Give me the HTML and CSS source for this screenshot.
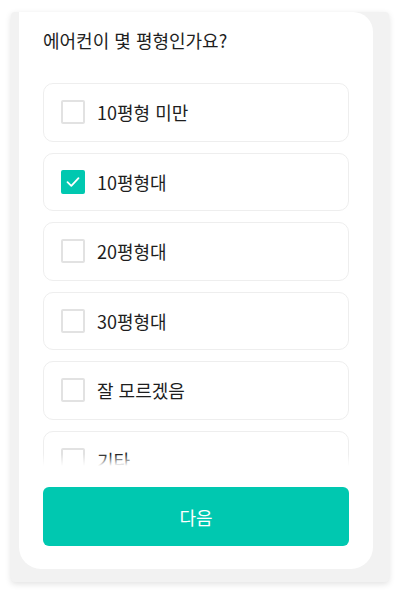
FILE: index.html
```html
<!DOCTYPE html>
<html lang="ko">
<head>
  <meta charset="UTF-8">
  <meta name="viewport" content="width=device-width, initial-scale=1.0">
  <title>에어컨 평형 선택</title>
  <link rel="stylesheet" href="styles.css">
</head>
<body>
<div class="shell">
  <div class="card">
    <h2 class="question">에어컨이 몇 평형인가요?</h2>

    <div class="list-wrap">
      <div class="list">
        <label class="option">
          <span class="box"></span>
          <span class="label">10평형 미만</span>
        </label>
        <label class="option">
          <span class="box checked">
            <svg width="16" height="16" viewBox="0 0 16 16"><polyline points="2.5,8.2 6.3,11.8 13.5,4.2" fill="none" stroke="#fff" stroke-width="1.8" stroke-linecap="round" stroke-linejoin="round"/></svg>
          </span>
          <span class="label">10평형대</span>
        </label>
        <label class="option">
          <span class="box"></span>
          <span class="label">20평형대</span>
        </label>
        <label class="option">
          <span class="box"></span>
          <span class="label">30평형대</span>
        </label>
        <label class="option">
          <span class="box"></span>
          <span class="label">잘 모르겠음</span>
        </label>
        <label class="option">
          <span class="box"></span>
          <span class="label">기타</span>
        </label>
      </div>
    </div>

    <button class="next">다음</button>
  </div>
</div>
</body>
</html>
```

FILE: styles.css
```css
body {
  margin: 0;
  background-color: #fff;
  font-family: "Noto Sans CJK KR", "Noto Sans", sans-serif;
  color: #222;
}

.shell {
  margin: 12px 11px 11px;
  width: 378px;
  height: 570px;
  background-color: #f2f2f2;
  border-radius: 4px;
  box-shadow: 0 2px 6px rgba(0, 0, 0, 0.12);
}

.card {
  margin-left: 8px;
  width: 306px;
  height: 534px;
  padding: 0 24px 23px;
  background-color: #fff;
  border-radius: 0 20px 22px 22px;
  display: flex;
  flex-direction: column;
}

.question {
  margin: 0;
  padding-top: 15px;
  font-size: 18px;
  line-height: 26px;
  font-weight: 400;
  color: #1e1e1e;
}

.list-wrap {
  position: relative;
  margin-top: 30px;
  height: 383px;
  overflow: hidden;
}

.list-wrap::after {
  content: "";
  position: absolute;
  left: 0;
  right: 0;
  bottom: 0;
  height: 12px;
  background: linear-gradient(rgba(255, 255, 255, 0), #fff);
}

.option {
  box-sizing: border-box;
  height: 58.5px;
  margin-bottom: 11px;
  padding-left: 17px;
  border: 1px solid #eeeeee;
  border-radius: 10px;
  display: flex;
  align-items: center;
  gap: 12px;
}

.box {
  box-sizing: border-box;
  width: 24px;
  height: 24px;
  border: 2px solid #e2e2e2;
  border-radius: 2px;
  display: flex;
  align-items: center;
  justify-content: center;
}

.box.checked {
  border-color: #00c8b0;
  background-color: #00c8b0;
}

.label {
  font-size: 18px;
  color: #1e1e1e;
}

.next {
  margin-top: 21px;
  height: 59px;
  border: none;
  border-radius: 6px;
  background-color: #00c8b0;
  color: #fff;
  font-family: inherit;
  font-size: 18px;
}
```
